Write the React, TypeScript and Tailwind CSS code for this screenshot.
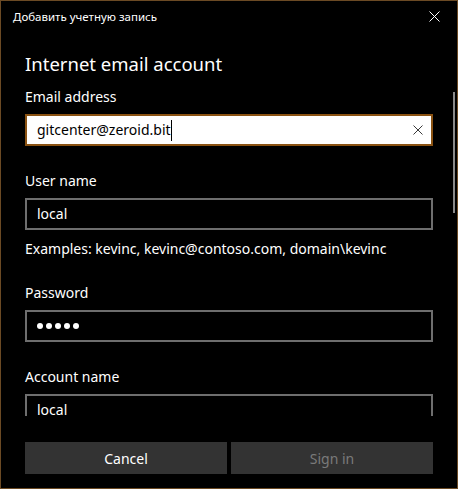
import React from "react";

const font = { fontFamily: '"Noto Sans", "Open Sans", sans-serif' };

function Label({ children, className = "" }: { children: React.ReactNode; className?: string }) {
  return <div className={`text-[14px] leading-[20px] text-white ${className}`}>{children}</div>;
}

function Box({ children, className = "" }: { children: React.ReactNode; className?: string }) {
  return (
    <div className={`h-[32px] shrink-0 border-2 border-[#6e6e6e] flex items-center pl-[10px] text-[14px] leading-[20px] text-white ${className}`}>
      {children}
    </div>
  );
}

export default function App() {
  return (
    <div
      className="relative w-[458px] h-[489px] bg-black border border-[#6b4a24] flex flex-col overflow-hidden"
      style={font}
    >
      {/* title bar */}
      <div className="h-[31px] shrink-0 flex items-center justify-between pl-[12px] pr-[17px]">
        <span className="text-[11.5px] leading-[16px] text-white">Добавить учетную запись</span>
        <svg width="11" height="11" viewBox="0 0 11 11" className="block">
          <path d="M0.5 0.5 L10.5 10.5 M10.5 0.5 L0.5 10.5" stroke="#ffffff" strokeWidth="1" />
        </svg>
      </div>

      {/* scrollable content */}
      <div className="h-[384px] shrink-0 overflow-hidden px-[24px] flex flex-col">
        <div className="mt-[18px] text-[18.5px] leading-[28px] text-white">Internet email account</div>
        <Label className="mt-[9px]">Email address</Label>
        <div className="mt-[7px] h-[32px] shrink-0 border-2 border-[#8a5212] bg-white flex items-center pl-[10px] pr-[8px] text-[14px] leading-[20px] text-black">
          <span>gitcenter@zeroid.bit</span>
          <span className="w-px h-[21px] bg-black" />
          <span className="flex-1" />
          <svg width="10" height="10" viewBox="0 0 10 10" className="block">
            <path d="M0.5 0.5 L9.5 9.5 M9.5 0.5 L0.5 9.5" stroke="#3a3a3a" strokeWidth="1" />
          </svg>
        </div>

        <Label className="mt-[25px]">User name</Label>
        <Box className="mt-[7px]">local</Box>
        <div className="mt-[9px] text-[14px] leading-[20px] text-white">
          Examples: kevinc, kevinc@contoso.com, domain\kevinc
        </div>

        <Label className="mt-[24px]">Password</Label>
        <Box className="mt-[7px]">
          <div className="flex gap-[3px]">
            <span className="w-[6px] h-[6px] rounded-full bg-white" />
            <span className="w-[6px] h-[6px] rounded-full bg-white" />
            <span className="w-[6px] h-[6px] rounded-full bg-white" />
            <span className="w-[6px] h-[6px] rounded-full bg-white" />
            <span className="w-[6px] h-[6px] rounded-full bg-white" />
          </div>
        </Box>

        <Label className="mt-[25px]">Account name</Label>
        <Box className="mt-[7px]">local</Box>
      </div>

      {/* footer */}
      <div className="px-[24px] pt-[26px] grid grid-cols-2 gap-[4px]">
        <button className="h-[32px] pt-[2px] bg-[#333333] text-white text-[14px] leading-[20px]">Cancel</button>
        <button className="h-[32px] pt-[2px] bg-[#333333] text-[#7a7a7a] text-[14px] leading-[20px]">Sign in</button>
      </div>

      {/* scrollbar overlay */}
      <div className="absolute left-[452px] top-[91px] w-[2px] h-[121px] bg-[#8a8a8a]" />
    </div>
  );
}
